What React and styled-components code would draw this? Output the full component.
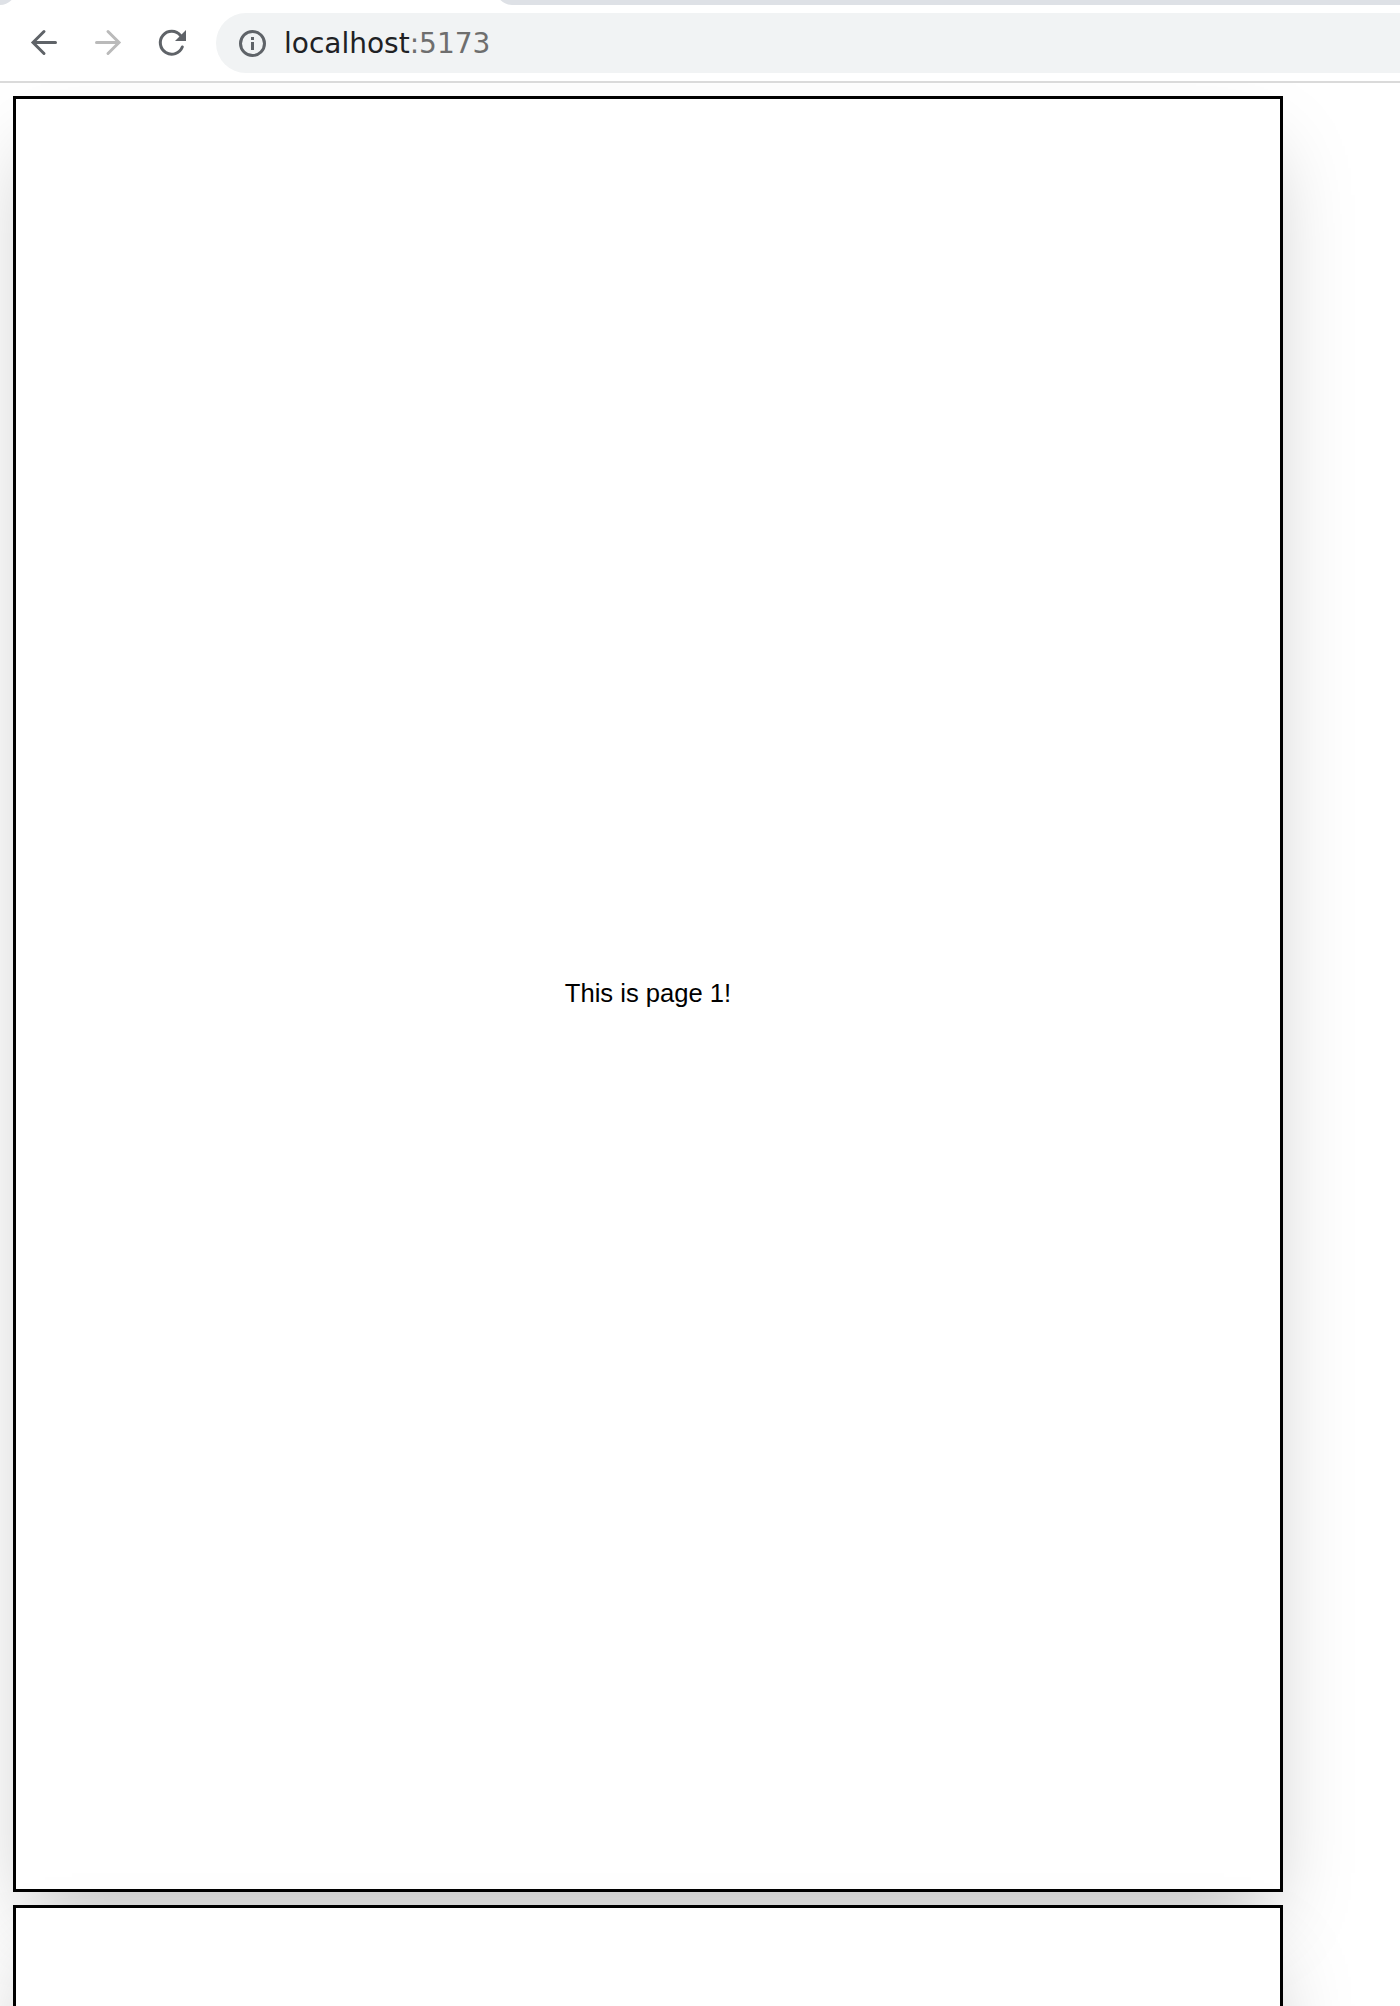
import React from "react";
import styled, { createGlobalStyle } from "styled-components";

const GlobalStyle = createGlobalStyle`
  html { background: #fff; }
  body { margin: 0; overflow: hidden; }
  * { box-sizing: border-box; }
`;

const Browser = styled.div`
  display: flex;
  flex-direction: column;
  width: 100%;
  height: 2006px;
  overflow: hidden;
  background: #fff;
`;

const TabStrip = styled.div`
  display: flex;
  flex: none;
  justify-content: space-between;
  align-items: flex-end;
  height: 5px;
  overflow: hidden;
`;

const TabEdge = styled.div`
  flex: none;
  height: 30px;
  width: ${(p) => p.$width}px;
  background: #dee1e6;
  border-radius: ${(p) => (p.$side === "left" ? "0 0 16px 0" : "0 0 0 16px")};
`;

const Toolbar = styled.header`
  display: flex;
  flex: none;
  align-items: center;
  height: 78px;
  padding-left: 28px;
  border-bottom: 2px solid #dadada;
  background: #fff;
`;

const NavButton = styled.button`
  display: flex;
  align-items: center;
  justify-content: center;
  width: 32px;
  height: 32px;
  margin: 0 32px 0 0;
  padding: 0;
  border: 0;
  background: none;
  color: ${(p) => (p.disabled ? "#bababa" : "#5f6368")};
`;

const Icon = styled.svg`
  display: block;
  flex: none;
  width: 32px;
  height: 32px;
  fill: none;
  stroke: currentColor;
  stroke-width: 3;
`;

const AddressBar = styled.div`
  display: flex;
  align-items: center;
  flex: 1;
  height: 60px;
  margin-left: -4px;
  padding-left: 20px;
  border-radius: 30px 0 0 30px;
  background: #f1f3f4;
  color: #5f6368;
`;

const Address = styled.span`
  margin-left: 16px;
  padding-top: 2px;
  font: 28px/34px "DejaVu Sans", sans-serif;
  color: #202124;
`;

const Port = styled.span`
  color: #6e6e6e;
`;

const Viewport = styled.main`
  display: flex;
  flex-direction: column;
  flex: 1;
  gap: 13px;
  min-height: 0;
  padding: 13px;
  overflow: hidden;
`;

const Sheet = styled.section`
  display: flex;
  flex: none;
  align-items: center;
  justify-content: center;
  width: 1270px;
  height: 1796px;
  padding-bottom: 2px;
  border: 3px solid #000;
  background: #fff;
  box-shadow: 0 40px 80px -19.2px rgba(0, 0, 0, 0.25);
  font: 25.6px/normal "Liberation Sans", Arial, sans-serif;
  color: #000;
`;

export default function App() {
  return (
    <Browser>
      <GlobalStyle />
      <TabStrip>
        <TabEdge $side="left" $width={16} />
        <TabEdge $side="right" $width={904} />
      </TabStrip>
      <Toolbar>
        <NavButton aria-label="Back">
          <Icon viewBox="0 0 32 32" strokeLinecap="round">
            <path d="M27.5 15.5H6M16 4.5l-11 11 11 11" />
          </Icon>
        </NavButton>
        <NavButton aria-label="Forward" disabled>
          <Icon viewBox="0 0 32 32" strokeLinecap="round">
            <path d="M4.5 15.5H26M16 4.5l11 11-11 11" />
          </Icon>
        </NavButton>
        <NavButton aria-label="Reload">
          <Icon viewBox="0 0 32 32" strokeLinecap="round">
            <path d="M26.3 20A11.4 11.4 0 1 1 24.5 8.5" />
            <path d="M30 3v11H19z" fill="currentColor" stroke="none" />
          </Icon>
        </NavButton>
        <AddressBar>
          <Icon viewBox="0 0 32 32">
            <circle cx="16.5" cy="16.5" r="12" />
            <path d="M16.5 15v8M16.5 10v3" />
          </Icon>
          <Address>
            localhost<Port>:5173</Port>
          </Address>
        </AddressBar>
      </Toolbar>
      <Viewport>
        <Sheet>This is page 1!</Sheet>
        <Sheet />
      </Viewport>
    </Browser>
  );
}
